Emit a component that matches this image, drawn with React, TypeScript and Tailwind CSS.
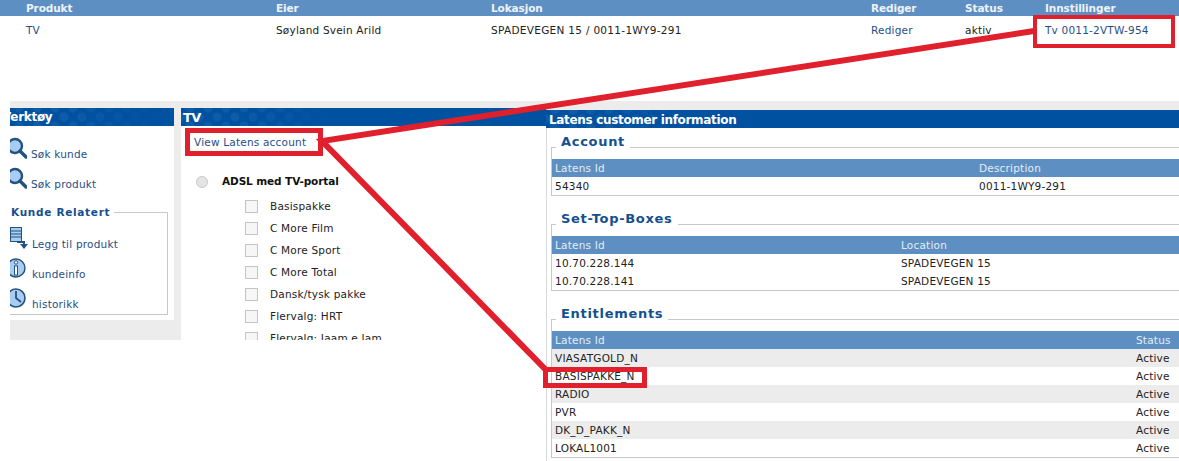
// App.tsx - customer admin screenshot with annotation overlay
const dots =
  "bg-[#00519f] bg-[linear-gradient(to_right,transparent_60px,#00519f_150px),radial-gradient(circle,#0e5ba8_4px,transparent_5px),radial-gradient(circle,#0e5ba8_4px,transparent_5px)] bg-[length:100%_100%,18px_18px,18px_18px] bg-[position:0_0,0_-9px,9px_0]";

const Lens = () => (
  <svg width="20" height="24" viewBox="0 0 20 24" className="shrink-0 -ml-[3px]">
    <circle cx="8" cy="9" r="7" fill="#a9cdf2" stroke="#23527f" strokeWidth="2.4" />
    <path d="M13 14 L19 20" stroke="#23527f" strokeWidth="3.4" strokeLinecap="round" />
  </svg>
);

const AddIcon = () => (
  <svg width="22" height="24" viewBox="0 0 22 24" className="shrink-0">
    <rect x="0.5" y="0.5" width="11" height="14" fill="#a9cdf2" stroke="#23527f" />
    <path d="M1 4h10M1 7h10M1 10h10" stroke="#23527f" strokeWidth="1.2" />
    <path d="M7 15h7v3" fill="none" stroke="#23527f" strokeWidth="2" />
    <path d="M10 17h8l-4 5z" fill="#23527f" />
  </svg>
);

const InfoIcon = () => (
  <svg width="20" height="24" viewBox="0 0 20 24" className="shrink-0 -ml-[3px]">
    <circle cx="9" cy="11" r="9" fill="#a9cdf2" stroke="#23527f" strokeWidth="1.4" />
    <circle cx="9" cy="5.5" r="1.7" fill="#fff" stroke="#23527f" />
    <rect x="7.5" y="9" width="3" height="9" fill="#fff" stroke="#23527f" />
  </svg>
);

const ClockIcon = () => (
  <svg width="20" height="24" viewBox="0 0 20 24" className="shrink-0 -ml-[3px]">
    <circle cx="9" cy="11" r="9" fill="#a9cdf2" stroke="#23527f" strokeWidth="1.6" />
    <path d="M9 4v7l5 4" fill="none" stroke="#23527f" strokeWidth="1.8" />
  </svg>
);

const SideLink = ({ icon, label, gap }: { icon: React.ReactNode; label: string; gap: string }) => (
  <div className="flex h-[30px] items-end">
    {icon}
    <span className={`${gap} text-[#1f4f86] leading-[13px]`}>{label}</span>
  </div>
);

const Fieldset = ({ title, top, children }: { title: string; top: string; children: React.ReactNode }) => (
  <div className={`relative ${top} h-fit border-y border-l border-[#c8c8c8]`}>
    <span className="absolute left-[4px] -top-[14px] bg-white px-[5px] text-[13px] leading-[16px] font-bold tracking-[0.7px] text-[#14508f]">
      {title}
    </span>
    <div className="pt-[11px]">{children}</div>
  </div>
);

const HeaderRow = ({ cols, right }: { cols: string; right: string }) => (
  <div className={`grid ${cols} h-[18px] items-center bg-[#5e8fc2] pl-[3px] text-[#e4edf6]`}>
    <span>Latens Id</span>
    <span>{right}</span>
  </div>
);

const Row = ({ cols, a, b, shade }: { cols: string; a: string; b: string; shade?: boolean }) => (
  <div className={`grid ${cols} h-[18px] items-center pl-[3px] text-[#222] ${shade ? "bg-[#ececec]" : "bg-white"}`}>
    <span>{a}</span>
    <span>{b}</span>
  </div>
);

const packages = [
  "Basispakke",
  "C More Film",
  "C More Sport",
  "C More Total",
  "Dansk/tysk pakke",
  "Flervalg: HRT",
  "Flervalg: Jaam e Jam",
];

const entitlements = ["VIASATGOLD_N", "BASISPAKKE_N", "RADIO", "PVR", "DK_D_PAKK_N", "LOKAL1001"];

export default function App() {
  return (
    <div className="relative h-[461px] w-[1179px] overflow-hidden bg-white font-['DejaVu_Sans',sans-serif] text-[10.5px] leading-[13px] tracking-[0.2px]">
      {/* Product table */}
      <div className="h-[101px]">
        <div className="grid h-[16px] grid-cols-[250px_215px_380px_94px_80px_1fr] items-center bg-[#5e8fc2] pl-[26px] font-bold tracking-[-0.1px] text-[#eef3f9]">
          <span>Produkt</span>
          <span>Eier</span>
          <span>Lokasjon</span>
          <span>Rediger</span>
          <span>Status</span>
          <span>Innstillinger</span>
        </div>
        <div className="grid h-[29px] grid-cols-[250px_215px_380px_94px_80px_1fr] items-center pl-[26px] text-[#222]">
          <span className="text-[#1f4f86]">TV</span>
          <span>Søyland Svein Arild</span>
          <span className="tracking-[0.3px]">SPADEVEGEN 15 / 0011-1WY9-291</span>
          <span className="text-[#1f4f86]">Rediger</span>
          <span>aktiv</span>
          <span className="text-[#1f4f86]">Tv 0011-2VTW-954</span>
        </div>
      </div>

      <div className="flex">
        {/* Left grey area with the two panels */}
        <div className="ml-[10px] flex h-[239px] w-[536px] gap-[7px] overflow-hidden bg-[#ececec] pt-[7px]">
          <div className="h-[212px] w-[164px] overflow-hidden bg-white">
            <div className={`h-[18px] overflow-hidden text-[12px] leading-[19px] font-bold tracking-[-0.3px] text-white ${dots}`}>
              <span className="-ml-[8px] block">Verktøy</span>
            </div>
            <div className="h-[12px]" />
            <div className="-mt-[7px] flex flex-col">
              <SideLink icon={<Lens />} label="Søk kunde" gap="ml-[4px]" />
              <SideLink icon={<Lens />} label="Søk produkt" gap="ml-[4px]" />
            </div>
            <div className="relative mt-[21px] h-[103px] w-[158px] border-y border-r border-[#c8c8c8]">
              <span className="absolute left-0 -top-[7px] bg-white pr-[4px] pl-[1px] font-bold tracking-[0.7px] text-[#14508f]">
                Kunde Relatert
              </span>
              <div className="flex flex-col pt-[8px]">
                <SideLink icon={<AddIcon />} label="Legg til produkt" gap="ml-[0px]" />
                <SideLink icon={<InfoIcon />} label="kundeinfo" gap="ml-[5px]" />
                <SideLink icon={<ClockIcon />} label="historikk" gap="ml-[5px]" />
              </div>
            </div>
          </div>

          <div className="min-w-0 flex-1 overflow-hidden bg-white">
            <div className={`h-[18px] pl-[2px] text-[13px] leading-[19px] font-bold tracking-[-0.5px] text-white ${dots}`}>TV</div>
            <div className="pt-[10px] pl-[13px] text-[#1f4f86]">View Latens account</div>
            <div className="mt-[26px] flex items-center pl-[15px]">
              <span className="h-[12px] w-[12px] rounded-full border border-[#c8c8c8] bg-[#e4e4e4]" />
              <span className="ml-[14px] font-bold tracking-[-0.1px] text-[#111]">ADSL med TV-portal</span>
            </div>
            <div className="mt-[12px] flex flex-col gap-[9px] pl-[64px]">
              {packages.map((name) => (
                <div key={name} className="flex items-center text-[#222]">
                  <span className="h-[13px] w-[13px] border border-[#c4c4c4] bg-[#f6f6f6]" />
                  <span className="ml-[12px]">{name}</span>
                </div>
              ))}
            </div>
          </div>
        </div>

        {/* Latens panel */}
        <div className="flex h-[360px] min-w-0 flex-1 flex-col">
          <div className="h-[9px] bg-[#ececec]" />
          <div className={`h-[18px] pl-[3px] text-[12px] leading-[20px] font-bold tracking-[-0.33px] text-white ${dots}`}>
            Latens customer information
          </div>
          <div className="flex-1 border-l border-[#d8d8d8] pl-[4px]">
            <Fieldset title="Account" top="mt-[19px]">
              <HeaderRow cols="grid-cols-[424px_1fr]" right="Description" />
              <Row cols="grid-cols-[424px_1fr]" a="54340" b="0011-1WY9-291" />
            </Fieldset>
            <Fieldset title="Set-Top-Boxes" top="mt-[28px]">
              <HeaderRow cols="grid-cols-[346px_1fr]" right="Location" />
              <Row cols="grid-cols-[346px_1fr]" a="10.70.228.144" b="SPADEVEGEN 15" />
              <Row cols="grid-cols-[346px_1fr]" a="10.70.228.141" b="SPADEVEGEN 15" />
            </Fieldset>
            <Fieldset title="Entitlements" top="mt-[28px]">
              <HeaderRow cols="grid-cols-[581px_1fr]" right="Status" />
              {entitlements.map((name, i) => (
                <Row key={name} cols="grid-cols-[581px_1fr]" a={name} b="Active" shade={i % 2 === 0} />
              ))}
            </Fieldset>
          </div>
        </div>
      </div>

      {/* Red annotation overlay */}
      <div className="absolute left-[1033px] top-[15px] h-[33px] w-[142px] border-[4px] border-[#e0202c]" />
      <div className="absolute left-[185px] top-[128px] h-[28px] w-[138px] border-[5px] border-[#e0202c]" />
      <div className="absolute left-[543px] top-[367px] h-[21px] w-[104px] border-[5px] border-[#e0202c]" />
      <svg width="1179" height="461" className="absolute left-0 top-0">
        <path d="M1034 31 L322 141 L547 371" fill="none" stroke="#e0202c" strokeWidth="6" />
      </svg>
    </div>
  );
}
